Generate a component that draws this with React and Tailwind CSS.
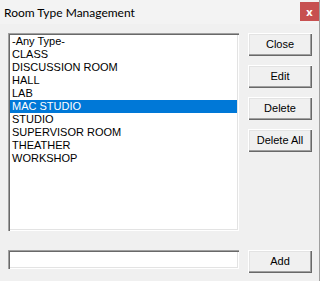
import React, { useState } from "react";

const ROOM_TYPES = [
  "-Any Type-",
  "CLASS",
  "DISCUSSION ROOM",
  "HALL",
  "LAB",
  "MAC STUDIO",
  "STUDIO",
  "SUPERVISOR ROOM",
  "THEATHER",
  "WORKSHOP",
];

const winFont = { fontFamily: '"Liberation Sans", Arial, sans-serif' };

const WinButton = ({ children }) => {
  return (
    <button
      className="w-[64px] h-[23px] bg-[#f0f0f0] text-[11px] text-black leading-none flex items-center justify-center shadow-[inset_1px_1px_#ffffff,inset_-1px_-1px_#696969,inset_-2px_-2px_#a0a0a0,inset_2px_2px_#e3e3e3]"
      style={winFont}
    >
      {children}
    </button>
  );
};

export default function App() {
  const [selected, setSelected] = useState(5);
  return (
    <div className="w-[320px] h-[281px] bg-[#f0f0f0] border-r border-[#a0a0a0] flex flex-col select-none">
      <div className="h-[24px] bg-[#f3f3f3] flex items-start justify-between pl-[4px]">
        <span
          className="text-[12px] text-black leading-none mt-[7px]"
          style={{ fontFamily: 'Lato, "Noto Sans", sans-serif' }}
        >
          Room Type Management
        </span>
        <div className="w-[19px] h-[19px] mt-[2px] bg-[#c75050] text-white text-[11px] font-bold leading-none flex items-center justify-center">
          x
        </div>
      </div>
      <div className="flex flex-col pl-[8px] pt-[9px]">
        <div className="flex gap-[9px]">
          <div className="w-[231px] h-[198px] bg-white p-[2px] shadow-[inset_1px_1px_#a0a0a0,inset_2px_2px_#696969,inset_-1px_-1px_#ffffff,inset_-2px_-2px_#e3e3e3]">
            {ROOM_TYPES.map((item, i) => (
              <div
                key={item}
                onClick={() => setSelected(i)}
                className={`h-[13px] pl-[2px] text-[11px] leading-[13px] whitespace-nowrap ${
                  i === selected ? "bg-[#0078d7] text-white" : "text-black"
                }`}
                style={winFont}
              >
                {item}
              </div>
            ))}
          </div>
          <div className="flex flex-col gap-[9px]">
            <WinButton>Close</WinButton>
            <WinButton>Edit</WinButton>
            <WinButton>Delete</WinButton>
            <WinButton>Delete All</WinButton>
          </div>
        </div>
        <div className="flex gap-[9px] mt-[19px]">
          <input
            className="w-[231px] h-[19px] bg-white outline-none px-[3px] text-[11px] shadow-[inset_1px_1px_#a0a0a0,inset_2px_2px_#696969,inset_-1px_-1px_#ffffff,inset_-2px_-2px_#e3e3e3]"
            style={winFont}
          />
          <WinButton>Add</WinButton>
        </div>
      </div>
    </div>
  );
}
